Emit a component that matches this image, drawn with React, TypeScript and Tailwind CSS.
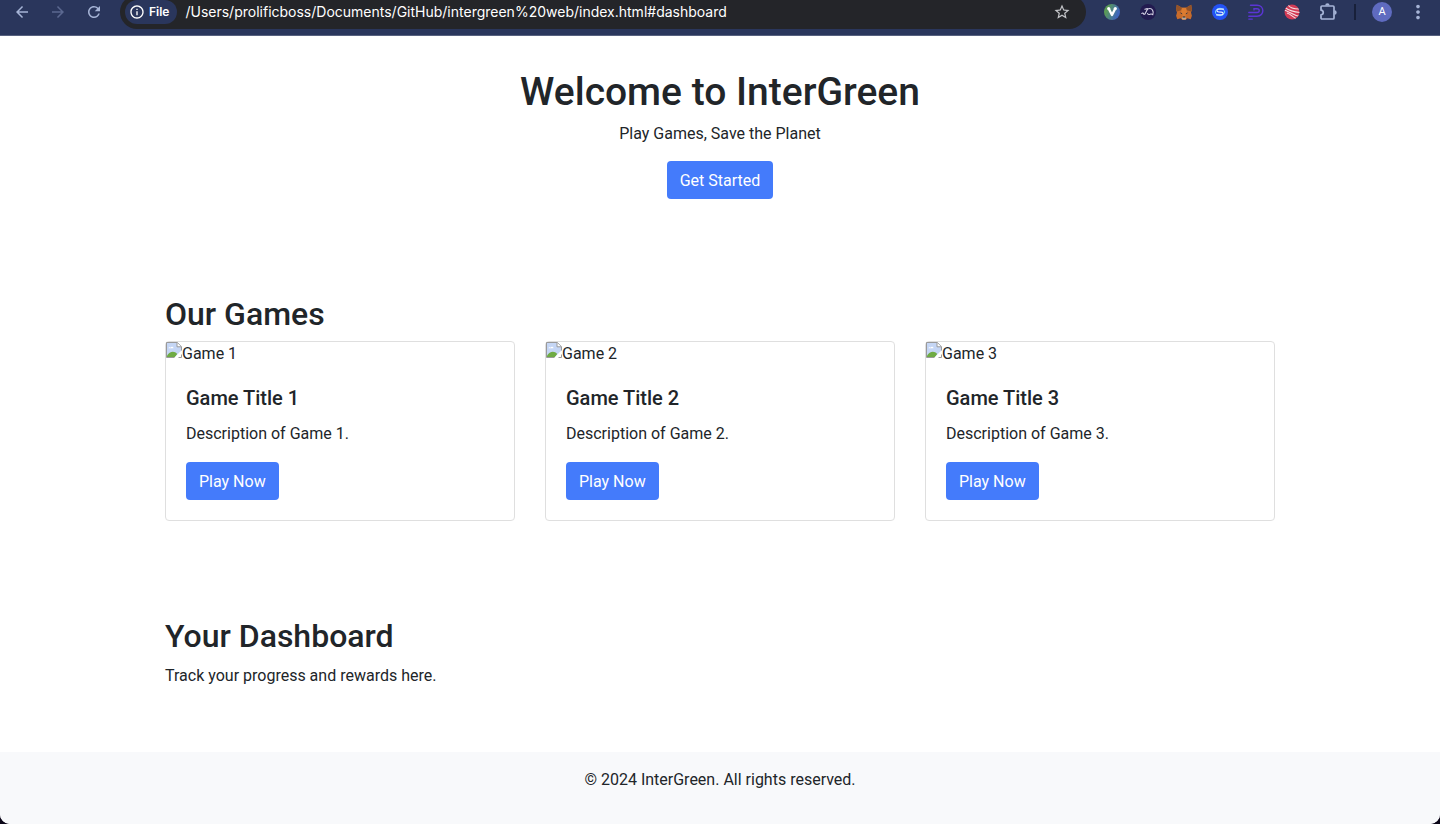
import type { ReactNode } from "react";
import { MdArrowBack, MdArrowForward, MdInfoOutline, MdMoreVert, MdRefresh, MdStarBorder } from "react-icons/md";

const games = [
  { id: 1, title: "Game Title 1", description: "Description of Game 1.", alt: "Game 1" },
  { id: 2, title: "Game Title 2", description: "Description of Game 2.", alt: "Game 2" },
  { id: 3, title: "Game Title 3", description: "Description of Game 3.", alt: "Game 3" },
];

const extensions = [
  { name: "Vault", icon: <VaultIcon /> },
  { name: "Rabbit wallet", icon: <RabbitIcon /> },
  { name: "Fox wallet", icon: <FoxIcon /> },
  { name: "Safe wallet", icon: <SwirlIcon /> },
  { name: "Dapp wallet", icon: <DappIcon /> },
  { name: "Striped wallet", icon: <StripeIcon /> },
  { name: "Extensions", icon: <PuzzleIcon /> },
];

function VaultIcon() {
  return (
    <svg width="16" height="16" viewBox="0 0 16 16">
      <defs>
        <linearGradient id="vault" x1="0" y1="0.3" x2="1" y2="0.7">
          <stop offset="0.15" stopColor="#5b9b55" />
          <stop offset="0.85" stopColor="#3f67bb" />
        </linearGradient>
      </defs>
      <circle cx="8" cy="8" r="8" fill="url(#vault)" />
      <path d="M4.7 4.5 8 11l3.3-6.5" fill="none" stroke="#fff" strokeWidth="2.4" strokeLinejoin="round" />
      <circle cx="4.7" cy="4.5" r="1.6" fill="#fff" />
      <circle cx="11.3" cy="4.5" r="1.6" fill="#fff" />
    </svg>
  );
}

function RabbitIcon() {
  return (
    <svg width="16" height="16" viewBox="0 0 16 16">
      <circle cx="8" cy="8" r="8" fill="#221b50" />
      <path
        d="M1.8 9.5c.6-.8 1.4-.6 1.7.2.3.8 1.2.8 1.6 0l1.8-3.4C8.2 3.9 11.3 4 12.6 6.2c.9 1.6.7 3.4.2 4.5-.8-.7-1.8-.8-2.9-.4-1.2.4-2.3 0-2.4-.8M4.8 5.2l2.6-.6"
        fill="none"
        stroke="#d9d7e8"
        strokeWidth="1.1"
        strokeLinecap="round"
      />
    </svg>
  );
}

function FoxIcon() {
  return (
    <svg width="16" height="16" viewBox="0 0 16 16">
      <path d="M.8.7 6 3.8h4L15.2.7 16 5.5l-1 3 .9 3.2-1.2 3.5-3.4-.9L9.5 16h-3l-1.8-1.7-3.4.9L.1 11.7 1 8.5l-1-3z" fill="#c96c2b" />
      <path d="m.8.7 5.2 3.1-.6 2.4L1 7.6 0 5.5zM15.2.7 10 3.8l.6 2.4L15 7.6l1-2.1z" fill="#935329" />
      <path d="M6 3.8h4l1 4.7-1.7 3.9H6.7L5 8.5z" fill="#dc7c30" />
      <path d="m3.6 8.6 2.3.3.5 1.6zM12.4 8.6l-2.3.3-.5 1.6z" fill="#263345" />
      <path d="M6.5 13h3l.6 1.8-.6.8h-3l-.6-.8z" fill="#b7a89b" />
      <path d="M7 12.4h2l.4 1.1H6.6z" fill="#202b39" />
    </svg>
  );
}

function SwirlIcon() {
  return (
    <svg width="16" height="16" viewBox="0 0 16 16" fill="none" strokeLinecap="round">
      <circle cx="8" cy="8" r="8" fill="#2452f5" />
      <ellipse cx="8" cy="8" rx="4.6" ry="3.7" stroke="#65d3f6" strokeWidth="1" />
      <path d="M11.5 5.2H6.8c-2.6 0-2.6 2.6 0 2.8l2.4.1c2.6.2 2.6 2.7 0 2.7H4.5" stroke="#e6efff" strokeWidth="1.2" />
    </svg>
  );
}

function DappIcon() {
  return (
    <svg width="16" height="16" viewBox="0 0 16 16" fill="none" stroke="#5b35d5" strokeWidth="1.4" strokeLinecap="round">
      <path d="M2.5 1.2H9c7.8 0 7.8 11 0 11H.8M.8 8.5H9c3 0 3-3.8 0-3.8H6v1.2M.8 15.1h3.5" />
    </svg>
  );
}

function StripeIcon() {
  return (
    <svg width="16" height="16" viewBox="0 0 16 16">
      <defs>
        <clipPath id="ball">
          <circle cx="8" cy="8" r="7.5" />
        </clipPath>
      </defs>
      <circle cx="8" cy="8" r="7.5" fill="#d23b56" />
      <g clipPath="url(#ball)" fill="none" stroke="#f5dfe3" strokeWidth="1.1">
        <path d="M4 1c2 3 6 4 11 4M1 3.5c4 3 8 4.5 15 5M0 6c5 1.5 9 5 15 6.3M3 9c4 1.3 6 4.3 9 5.5" />
      </g>
    </svg>
  );
}

function PuzzleIcon() {
  return (
    <svg width="18" height="18" viewBox="0 0 18 18">
      <path
        d="M3 3h11c.6 0 1 .4 1 1v11c0 .6-.4 1-1 1H3c-.6 0-1-.4-1-1v-3.2c3-.3 3-4.3 0-4.6V4c0-.6.4-1 1-1z"
        fill="none"
        stroke="#a6b4d6"
        strokeWidth="1.7"
        strokeLinejoin="round"
      />
      <path d="M6.2 2.5a2.2 2.2 0 0 1 4.4 0zM15.5 7.3a2.2 2.2 0 0 1 0 4.4z" fill="#a6b4d6" />
    </svg>
  );
}

function BrokenImage() {
  return (
    <svg width="16" height="16" viewBox="0 0 16 16" className="shrink-0" aria-hidden="true">
      <path d="M.5.5h10.8l4.2 4.2v4.1L9 15.5H.5z" fill="#c5d6f5" />
      <path d="M2.5 6.3c0-1.2 1.7-1.5 2-.5.6-1.5 3-1.2 3 .5z" fill="#fff" />
      <path d="M1 15v-1.2C3.5 9.4 8.3 8.5 11.2 12L8.8 15.5z" fill="#6fab44" />
      <path d="M8 16 16 8v3l-5 5z" fill="#fff" />
      <path d="M8.3 15.5H.5V.5h10.8l4.2 4.2v3.8" fill="none" stroke="#9a9a9a" />
      <path d="M11 .7v4.1h4.3" fill="#fff" stroke="#9a9a9a" />
      <path d="M15.5 12.5v3h-3" fill="none" stroke="#9a9a9a" />
    </svg>
  );
}

function ToolbarButton({ label, children }: { label: string; children: ReactNode }) {
  return (
    <button type="button" aria-label={label} className="flex h-full w-9 shrink-0 items-center justify-center text-[#a6b4d6]">
      {children}
    </button>
  );
}

function PrimaryLink({ href, children }: { href: string; children: ReactNode }) {
  return (
    <a href={href} className="inline-block rounded-sm bg-[#447bfb] px-[13px] pt-2 pb-1.5 align-top text-white">
      {children}
    </a>
  );
}

function BrowserBar() {
  return (
    <div className="h-9 overflow-hidden border-b border-[#57617f] bg-[#2a365c]">
      {/* The toolbar is cut off a little at the top of the window */}
      <div className="-mt-[5px] flex h-[34px] items-center px-1">
        <ToolbarButton label="Back">
          <MdArrowBack size={18} />
        </ToolbarButton>
        <ToolbarButton label="Forward">
          <MdArrowForward size={18} className="text-[#5b6890]" />
        </ToolbarButton>
        <ToolbarButton label="Reload">
          <MdRefresh size={18} />
        </ToolbarButton>

        <div className="mx-2 flex h-full min-w-0 flex-1 items-center rounded-full bg-[#242529] pl-[5px] pr-1.5">
          <button
            type="button"
            className="flex h-6 shrink-0 items-center gap-1 rounded-full bg-[#2a365c] pl-1 pr-2 font-['Inter',sans-serif] text-[12px] font-semibold text-white"
          >
            <MdInfoOutline size={16} />
            File
          </button>
          <input
            type="text"
            aria-label="Address"
            defaultValue="/Users/prolificboss/Documents/GitHub/intergreen%20web/index.html#dashboard"
            className="ml-2 min-w-0 flex-1 bg-transparent font-['Inter',sans-serif] text-[14px] text-white outline-none"
          />
          <button type="button" aria-label="Bookmark" className="flex w-9 shrink-0 justify-center text-[#c4c5c9]">
            <MdStarBorder size={18} />
          </button>
        </div>

        {extensions.map((ext) => (
          <ToolbarButton key={ext.name} label={ext.name}>
            {ext.icon}
          </ToolbarButton>
        ))}
        <div className="flex w-[18px] shrink-0 justify-center">
          <span className="h-4 w-0.5 bg-[#18203a]" />
        </div>
        <ToolbarButton label="Profile">
          <span className="flex size-5 items-center justify-center rounded-full bg-[#5f6bc0] text-[11px] text-white">A</span>
        </ToolbarButton>
        <ToolbarButton label="Menu">
          <MdMoreVert size={22} />
        </ToolbarButton>
      </div>
    </div>
  );
}

export default function App() {
  return (
    <div className="min-h-screen bg-[#0b0618] font-['Roboto','Liberation_Sans',sans-serif] text-[16px] leading-6 text-[#212529]">
      <div className="min-h-screen overflow-hidden rounded-b-[10px] bg-white">
        <BrowserBar />

        {/* Hero */}
        <header className="px-4 pt-8 pb-12 text-center">
          <h1 className="mb-1.5 text-[39px] leading-12 font-medium">Welcome to InterGreen</h1>
          <p className="mb-[15px]">Play Games, Save the Planet</p>
          <PrimaryLink href="#games">Get Started</PrimaryLink>
        </header>

        {/* Games */}
        <section id="games" className="mx-auto max-w-[1140px] px-[15px] py-12">
          <h2 className="mb-2 text-[32px] leading-[1.2] font-medium">Our Games</h2>
          <div className="grid grid-cols-1 gap-[30px] md:grid-cols-3">
            {games.map((game) => (
              <div key={game.id} className="rounded-sm border border-[#dfdfdf]">
                <div className="flex h-6">
                  <BrokenImage />
                  <span>{game.alt}</span>
                </div>
                <div className="p-5">
                  <h5 className="mb-3 text-[20px] leading-[1.2] font-medium">{game.title}</h5>
                  <p className="mb-4">{game.description}</p>
                  <PrimaryLink href="#play">Play Now</PrimaryLink>
                </div>
              </div>
            ))}
          </div>
        </section>

        {/* Dashboard */}
        <section id="dashboard" className="mx-auto max-w-[1140px] px-[15px] py-12">
          <h2 className="mb-2 text-[32px] leading-[1.2] font-medium">Your Dashboard</h2>
          <p className="mb-4">Track your progress and rewards here.</p>
        </section>

        <footer className="bg-[#f8f9fb] py-4 text-center">
          <p className="mb-4">© 2024 InterGreen. All rights reserved.</p>
        </footer>
      </div>
    </div>
  );
}
